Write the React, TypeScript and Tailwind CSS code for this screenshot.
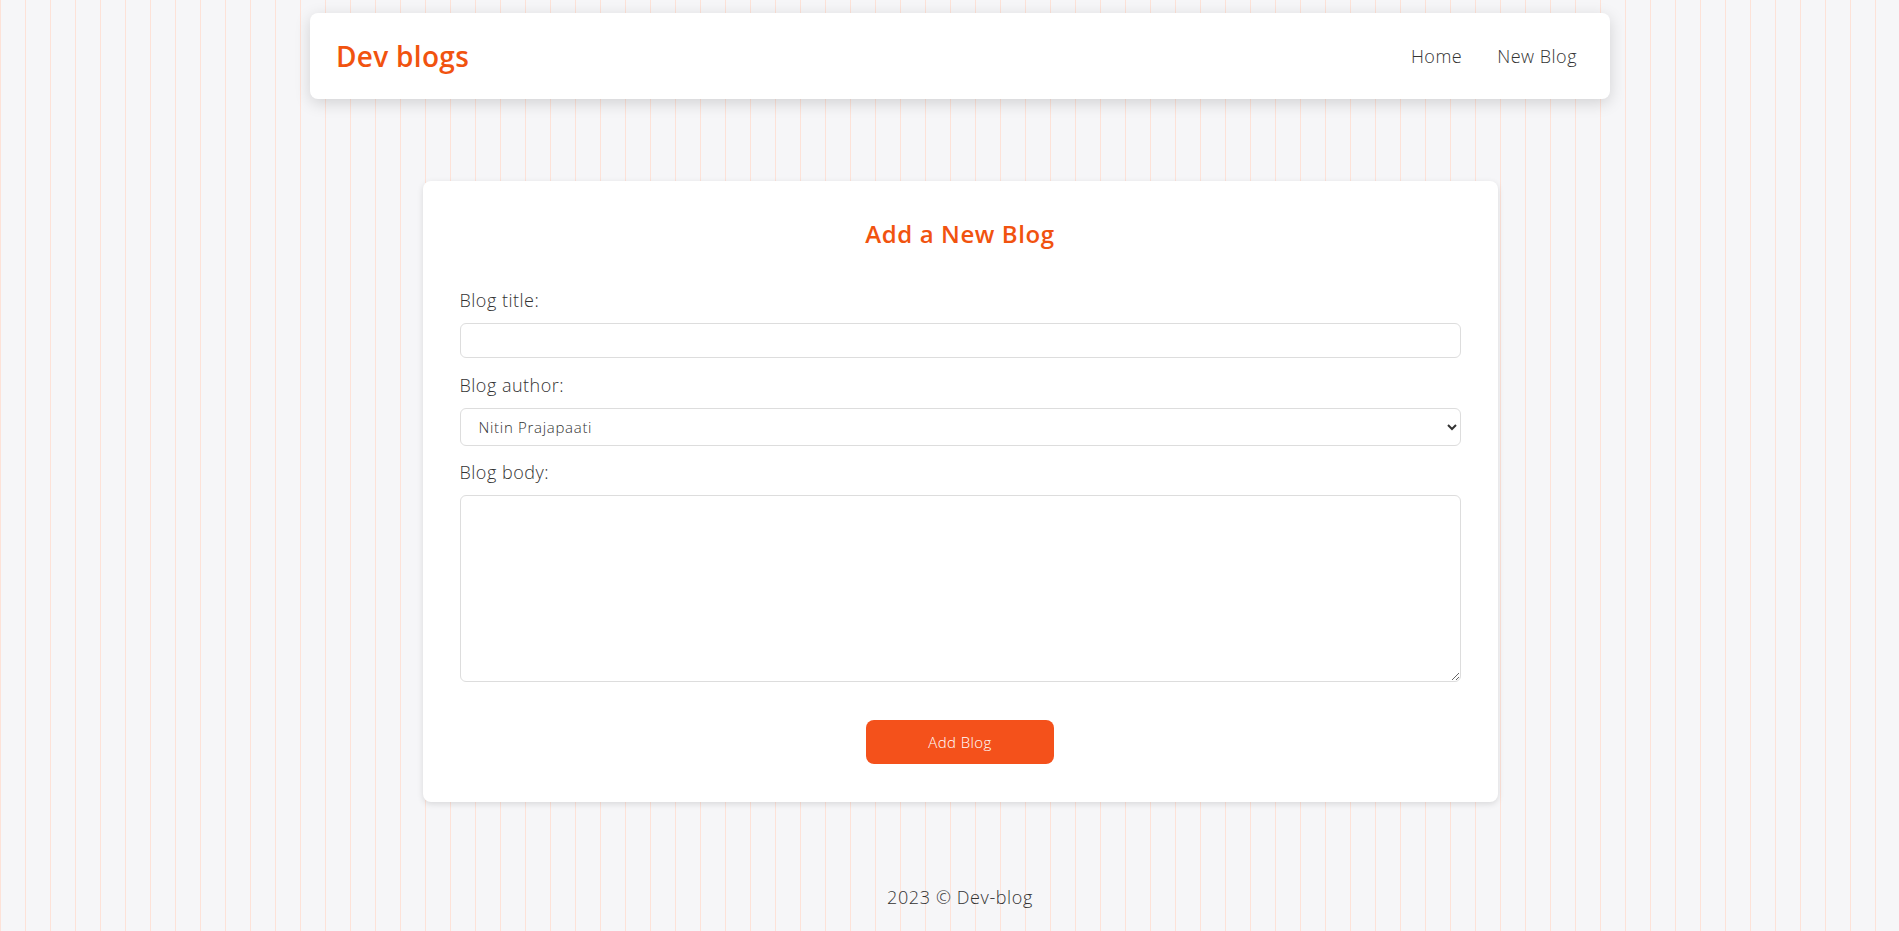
import React from "react";

export default function App() {
  return (
    <div
      className="min-h-screen w-full bg-[#f6f6f8] bg-[linear-gradient(to_right,#fde2d8_1px,transparent_1px)] bg-[length:25px_100%] font-['Open_Sans','Noto_Sans',sans-serif] text-[#444]"
    >
      <div className="flex flex-col items-center pt-[13px] pl-[21px]">
        <nav className="flex h-[86px] w-[1300px] items-center justify-between rounded-lg bg-white pl-[26px] pr-[33px] shadow-[0_4px_16px_rgba(0,0,0,0.15)]">
          <h1 className="text-[28px] font-semibold tracking-[0.3px] text-[#f1530f]">Dev blogs</h1>
          <div className="flex items-center gap-[35px] text-[18px] font-light tracking-[0.5px] text-[#333]">
            <a href="#">Home</a>
            <a href="#">New Blog</a>
          </div>
        </nav>

        <div className="mt-[82px] w-[1075px] rounded-lg bg-white px-[37px] pt-[37px] pb-[38px] shadow-[0_2px_6px_rgba(0,0,0,0.12)]">
          <h2 className="text-center text-[24px] leading-[32px] font-semibold tracking-[0.6px] text-[#f1530f]">
            Add a New Blog
          </h2>
          <form className="mt-[37px] flex flex-col">
            <label className="text-[18px] leading-[26px] font-light tracking-[0.5px] text-[#333]">Blog title:</label>
            <input
              type="text"
              className="mt-[10px] h-[35px] w-full rounded-md border border-[#ddd] bg-white px-3 text-[14px] outline-none"
            />
            <label className="mt-[14px] text-[18px] leading-[26px] font-light tracking-[0.5px] text-[#333]">Blog author:</label>
            <select className="mt-[10px] h-[38px] w-full rounded-md border border-[#ddd] bg-white pl-[14px] pr-2 text-[15px] font-light tracking-[0.7px] text-[#333] outline-none">
              <option>Nitin Prajapaati</option>
              <option>Jane Doe</option>
            </select>
            <label className="mt-[13px] text-[18px] leading-[26px] font-light tracking-[0.5px] text-[#333]">Blog body:</label>
            <textarea className="mt-[10px] h-[187px] w-full rounded-md border border-[#ddd] bg-white p-2 text-[14px] outline-none" />
            <div className="mt-[38px] flex justify-center">
              <button
                type="button"
                className="h-[44px] w-[188px] rounded-lg bg-[#f4511b] text-[15px] font-light tracking-[0.4px] text-white"
              >
                Add Blog
              </button>
            </div>
          </form>
        </div>

        <footer className="mt-[82px] text-[18px] leading-[26px] font-light tracking-[0.6px] text-[#333]">2023 © Dev-blog</footer>
      </div>
    </div>
  );
}
